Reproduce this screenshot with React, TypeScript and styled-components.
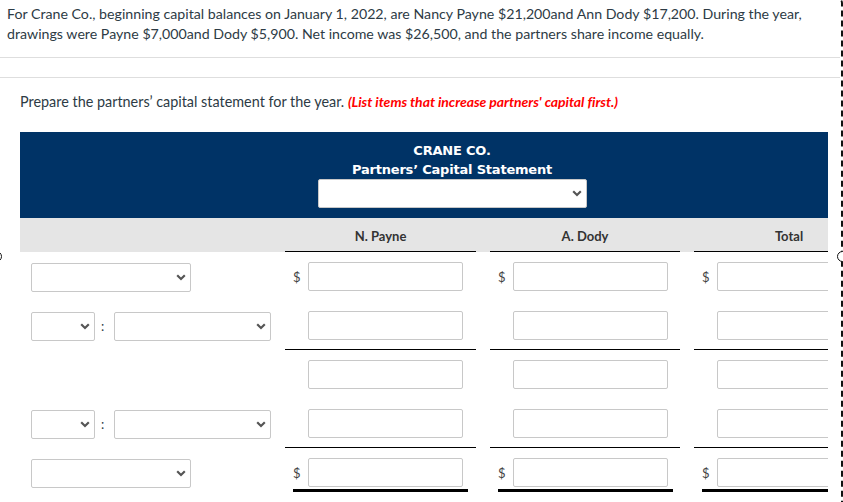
import React from 'react';
import styled, { createGlobalStyle, css } from 'styled-components';

const GlobalStyle = createGlobalStyle`
      html, body {
            margin: 0;
            padding: 0;
            overflow: hidden;
            background: #fff;
      }
      body {
            font-family: Lato, 'Open Sans', sans-serif;
            color: #333;
      }
`;

const Chevron: React.FC = () => (
      <ChevronIcon width='10' height='7' viewBox='0 0 10 7'>
            <path d='M1.2 1.3 L5 5 L8.8 1.3' fill='none' stroke='#555' strokeWidth='2.2' />
      </ChevronIcon>
);

const Dropdown: React.FC<{ width: number }> = ({ width }) => (
      <SelectWrap $width={width}>
            <Select defaultValue=''>
                  <option value='' />
            </Select>
            <Chevron />
      </SelectWrap>
);

const AmountCell: React.FC<{ dollar?: boolean; line?: 'thin' | 'double' }> = ({ dollar, line }) => (
      <Cell $thin={line === 'thin'}>
            <AmountBox $double={line === 'double'}>
                  <Dollar>{dollar ? '$' : ''}</Dollar>
                  <Input type='text' />
            </AmountBox>
      </Cell>
);

const SingleLabel = () => (
      <LabelCell>
            <Dropdown width={160} />
      </LabelCell>
);

const PairLabel = () => (
      <LabelCell>
            <Dropdown width={65} />
            <Colon>:</Colon>
            <Dropdown width={160} />
      </LabelCell>
);

const App: React.FC = () => {
      const rows: { label: React.ReactNode; dollar?: boolean; line?: 'thin' | 'double' }[] = [
            { label: <SingleLabel />, dollar: true },
            { label: <PairLabel />, line: 'thin' },
            { label: <LabelCell /> },
            { label: <PairLabel />, line: 'thin' },
            { label: <SingleLabel />, dollar: true, line: 'double' },
      ];

      return (
            <Page>
                  <GlobalStyle />
                  <Question>
                        For Crane Co., beginning capital balances on January 1, 2022, are Nancy Payne $21,200and Ann
                        Dody $17,200. During the year, drawings were Payne $7,000and Dody $5,900. Net income was
                        $26,500, and the partners share income equally.
                  </Question>
                  <Gap />
                  <Part>
                        <Instruction>
                              Prepare the partners’ capital statement for the year.{' '}
                              <Note>(List items that increase partners' capital first.)</Note>
                        </Instruction>
                        <TableClip>
                              <Table>
                                    <Banner>
                                          <Title>CRANE CO.</Title>
                                          <Title>Partners’ Capital Statement</Title>
                                          <Dropdown width={269} />
                                    </Banner>
                                    <HeadRow>
                                          <HeadCell />
                                          <HeadCell $underline>N. Payne</HeadCell>
                                          <HeadCell $underline>A. Dody</HeadCell>
                                          <HeadCell $underline>Total</HeadCell>
                                    </HeadRow>
                                    {rows.map((row, i) => (
                                          <Row key={i}>
                                                {row.label}
                                                <AmountCell dollar={row.dollar} line={row.line} />
                                                <AmountCell dollar={row.dollar} line={row.line} />
                                                <AmountCell dollar={row.dollar} line={row.line} />
                                          </Row>
                                    ))}
                              </Table>
                        </TableClip>
                  </Part>
                  <SelectionFrame>
                        <Handle $side='left' />
                        <Handle $side='right' />
                  </SelectionFrame>
            </Page>
      );
};

export default App;

const Page = styled.div`
      position: relative;
      width: 843px;
      height: 502px;
      overflow: hidden;
`;

const Question = styled.div`
      width: 826px;
      padding: 4px 7px 13px;
      font-size: 14.2px;
      line-height: 20px;
      color: #2d3b45;
      border-bottom: 1px solid #dedede;
`;

const Gap = styled.div`
      width: 840px;
      height: 19px;
      border-bottom: 1px solid #dedede;
`;

const Part = styled.div`
      padding: 14px 0 0 20px;
`;

const Instruction = styled.p`
      margin: 0 0 20px;
      font-size: 14.4px;
      line-height: 20px;
      color: #2d3b45;
`;

const Note = styled.em`
      font-family: Lato, sans-serif;
      font-weight: 700;
      font-size: 14px;
      letter-spacing: -0.05px;
      color: #f00;
`;

const TableClip = styled.div`
      width: 808px;
      overflow: hidden;
`;

const Table = styled.div`
      width: 864px;
`;

const Banner = styled.div`
      display: flex;
      flex-direction: column;
      align-items: center;
      padding: 9px 0 10px;
      background: #003366;
`;

const Title = styled.div`
      font-family: 'DejaVu Sans', Verdana, sans-serif;
      font-weight: 700;
      font-size: 13px;
      letter-spacing: -0.2px;
      line-height: 19px;
      color: #fff;
`;

const grid = css`
      display: grid;
      grid-template-columns: 251px 191px 190px 190px;
      column-gap: 14px;
`;

const HeadRow = styled.div`
      ${grid};
      background: #e5e5e5;
`;

const HeadCell = styled.div<{ $underline?: boolean }>`
      height: 29px;
      padding-top: 4px;
      line-height: 29px;
      text-align: center;
      font-size: 13px;
      font-weight: 700;
      color: #333;
      border-bottom: 1px solid ${({ $underline }) => ($underline ? '#000' : 'transparent')};
`;

const Row = styled.div`
      ${grid};
`;

const LabelCell = styled.div`
      display: flex;
      align-items: center;
      padding: 10px 0 9px 11px;
`;

const Colon = styled.span`
      width: 19px;
      padding-left: 6px;
      box-sizing: border-box;
      font-size: 13px;
      color: #2d3b45;
`;

const Cell = styled.div<{ $thin?: boolean }>`
      padding: 10px 0 9px 8px;
      border-bottom: 1px solid ${({ $thin }) => ($thin ? '#000' : 'transparent')};
`;

const AmountBox = styled.div<{ $double?: boolean }>`
      display: flex;
      align-items: center;
      width: 175px;
      padding-bottom: ${({ $double }) => ($double ? '2px' : '0')};
      margin-bottom: ${({ $double }) => ($double ? '-5px' : '0')};
      border-bottom: ${({ $double }) => ($double ? '3px solid #000' : 'none')};
`;

const Dollar = styled.span`
      width: 15px;
      font-size: 13px;
      color: #444;
`;

const Input = styled.input`
      box-sizing: border-box;
      width: 155px;
      height: 29px;
      margin: 0;
      border: 1px solid #c8c8c8;
      border-radius: 2px;
      background: #fff;
      font: inherit;
`;

const SelectWrap = styled.div<{ $width: number }>`
      position: relative;
      width: ${({ $width }) => $width}px;
      height: 29px;
`;

const Select = styled.select`
      appearance: none;
      box-sizing: border-box;
      width: 100%;
      height: 100%;
      margin: 0;
      border: 1px solid #c8c8c8;
      border-radius: 2px;
      background: #fff;
      font: inherit;
`;

const ChevronIcon = styled.svg`
      position: absolute;
      right: 5px;
      top: 11px;
      pointer-events: none;
`;

const SelectionFrame = styled.div`
      position: absolute;
      top: -2px;
      left: -4px;
      width: 847px;
      height: 512px;
      box-sizing: border-box;
      border: 2px dashed #111;
      border-radius: 5px;
      pointer-events: none;
`;

const Handle = styled.span<{ $side: 'left' | 'right' }>`
      position: absolute;
      top: 251px;
      ${({ $side }) => ($side === 'left' ? 'left: -7px;' : 'right: -7px;')}
      width: 9px;
      height: 9px;
      border: 1.5px solid #111;
      border-radius: 50%;
      background: #fff;
`;
